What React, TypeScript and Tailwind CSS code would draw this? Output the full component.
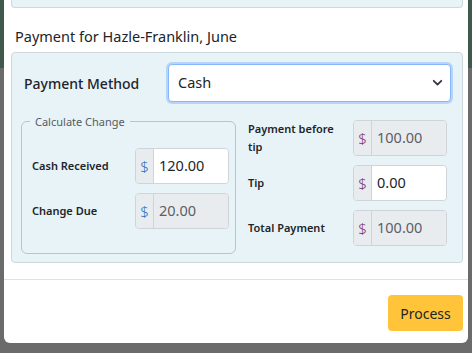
import type { ReactNode } from "react";

function Chevron() {
  return (
    <svg width="11" height="11" viewBox="0 0 16 16" fill="none" aria-hidden="true">
      <path d="M2.5 5.5l5.5 5.5 5.5-5.5" stroke="#343a40" strokeWidth="2.6" strokeLinecap="round" strokeLinejoin="round" />
    </svg>
  );
}

function MoneyInput({
  value,
  disabled,
  tone,
}: {
  value: string;
  disabled?: boolean;
  tone: "blue" | "plum";
}) {
  return (
    <div className="flex h-[36px] w-[94px] overflow-hidden rounded-[4px] border border-[#ced4da]">
      <span
        className={
          "flex w-[18px] shrink-0 items-center justify-center border-r border-[#ced4da] bg-[#e9ecef] text-[15px] font-light " +
          (tone === "blue" ? "text-[#2a6ebf]" : "text-[#7a2f6e]")
        }
      >
        $
      </span>
      <input
        readOnly
        disabled={disabled}
        value={value}
        className={
          "w-full min-w-0 px-[5px] text-[14.5px] outline-none " +
          (disabled ? "bg-[#e9ecef] text-[#5a6066]" : "bg-white text-[#212529]")
        }
      />
    </div>
  );
}

function Row({ label, children, tall }: { label: ReactNode; children: ReactNode; tall?: boolean }) {
  return (
    <div className="flex items-center justify-between">
      <span className={"text-[11px] font-semibold leading-[18px] text-[#212529] " + (tall ? "w-[95px]" : "")}>
        {label}
      </span>
      {children}
    </div>
  );
}

export default function App() {
  return (
    <div
      className="flex h-[353px] w-[472px] overflow-hidden bg-[linear-gradient(#3f5a4c_0,#3f5a4c_68px,#6b6b6b_68px)] text-[#212529]"
      style={{ fontFamily: '"Noto Sans", "Open Sans", sans-serif' }}
    >
      <div className="ml-[4px] flex h-[343px] w-[464px] flex-col rounded-b-[6px] bg-white">
        <div className="pl-[7px] pr-[5px]">
          <div className="h-[8px] rounded-b-[4px] border border-t-0 border-[#cdd8de] bg-[#e8f3f8]" />
          <h2 className="mt-[18px] pl-[4px] text-[14.5px] leading-[20px]">Payment for Hazle-Franklin, June</h2>

          <div className="mt-[6px] h-[211px] rounded-[4px] border border-[#cdd8de] bg-[#e8f3f8] px-[9px] pt-[11px]">
            <div className="flex items-center pl-[3px] pr-[2px]">
              <span className="w-[144px] text-[14px] font-medium">Payment Method</span>
              <div className="relative flex-1">
                <select className="h-[38px] w-full appearance-none rounded-[4px] border border-[#86b7fe] bg-white pl-[9px] text-[14.5px] text-[#212529] shadow-[0_0_0_2px_rgba(13,110,253,0.22)] outline-none">
                  <option>Cash</option>
                </select>
                <span className="pointer-events-none absolute right-[8px] top-[13px]">
                  <Chevron />
                </span>
              </div>
            </div>

            <div className="mt-[12px] flex">
              <fieldset className="h-[140px] w-[215px] rounded-[6px] border border-[#b9c3c8]">
                <legend className="ml-[8px] px-[5px] text-[11px] leading-[15px] text-[#555b61]">Calculate Change</legend>
                <div className="flex flex-col gap-[9px] pl-[10px] pr-[6px] pt-[19px]">
                  <Row label="Cash Received">
                    <MoneyInput value="120.00" tone="blue" />
                  </Row>
                  <Row label="Change Due">
                    <MoneyInput value="20.00" disabled tone="blue" />
                  </Row>
                </div>
              </fieldset>

              <div className="ml-[12px] mt-[6px] flex w-[199px] flex-col gap-[9px]">
                <Row label="Payment before tip" tall>
                  <MoneyInput value="100.00" disabled tone="plum" />
                </Row>
                <Row label="Tip">
                  <MoneyInput value="0.00" tone="plum" />
                </Row>
                <Row label="Total Payment">
                  <MoneyInput value="100.00" disabled tone="plum" />
                </Row>
              </div>
            </div>
          </div>
        </div>

        <div className="mt-[16px] border-t border-[#dee2e6]" />
        <div className="flex justify-end pr-[5px] pt-[15px]">
          <button className="h-[36px] w-[75px] rounded-[4px] bg-[#ffc439] text-[14px] text-[#212529]">Process</button>
        </div>
      </div>
    </div>
  );
}
